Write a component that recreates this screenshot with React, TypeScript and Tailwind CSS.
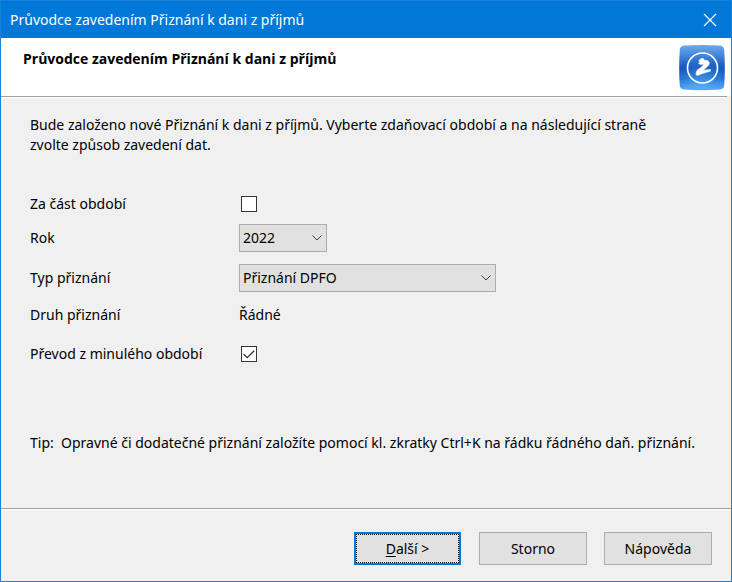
import React, { useState } from "react";

const YEARS = ["2022", "2021", "2020"];
const RETURN_TYPES = ["Přiznání DPFO", "Přiznání DPPO"];

function AppLogo() {
  return (
    <svg viewBox="0 0 46 46" className="w-[46px] h-[46px]" aria-hidden="true">
      <defs>
        <linearGradient id="logoBg" x1="0" y1="0" x2="0" y2="1">
          <stop offset="0" stopColor="#6fa9ea" />
          <stop offset="0.25" stopColor="#3f83da" />
          <stop offset="0.5" stopColor="#1757bd" />
          <stop offset="0.75" stopColor="#1f6fd2" />
          <stop offset="1" stopColor="#58abf2" />
        </linearGradient>
        <radialGradient id="logoGlow" cx="0.5" cy="0.95" r="0.6">
          <stop offset="0" stopColor="#5cb4fa" stopOpacity="0.6" />
          <stop offset="1" stopColor="#5cb4fa" stopOpacity="0" />
        </radialGradient>
      </defs>
      <path
        d="M5 0.500Q23 -0.500 41 0.500Q45 1 45.200 5Q46.500 23 45.200 40.500Q45 44 41 44.500Q23 46 5 44.500Q1 44 0.800 40.500Q-0.500 23 0.800 5Q1 1 5 0.500Z"
        fill="url(#logoBg)"
      />
      <rect x="1" y="1" width="44" height="43" rx="4" fill="url(#logoGlow)" />
      <circle cx="23.500" cy="23" r="15" fill="none" stroke="#fff" strokeWidth="1.600" />
      <path
        d="M19.800 15.800L22 13.600L24.300 13.400L25.300 15.200L28.500 15.500L30.300 17.500L29.800 20L27.500 22.300L24 25.300L31.500 24.600L31.300 26.200L26.500 27.600L22 29L18.500 30.600L17 29.700L17.200 27.500L18.300 25L22 22.500L25.200 19L21.500 19.400L19.500 18.300L21 17.200Z"
        fill="#fff"
        stroke="#fff"
        strokeWidth="0.600"
        strokeLinejoin="round"
      />
    </svg>
  );
}

type SelectBoxProps = {
  id: string;
  value: string;
  options: string[];
  width: string;
  onChange: (value: string) => void;
};

function SelectBox({ id, value, options, width, onChange }: SelectBoxProps) {
  return (
    <div className={`relative ${width}`}>
      <select
        id={id}
        value={value}
        onChange={(e) => onChange(e.target.value)}
        className="block w-full h-7 pl-[3px] pr-6 appearance-none border border-[#adadad] bg-[#e1e1e1] outline-none"
      >
        {options.map((option) => (
          <option key={option} value={option}>
            {option}
          </option>
        ))}
      </select>
      <svg
        viewBox="0 0 10 6"
        className="absolute right-[5px] top-[11px] w-[10px] h-[6px] pointer-events-none"
        fill="none"
        stroke="#404040"
        aria-hidden="true"
      >
        <path d="M0.500 0.500L5 5L9.500 0.500" />
      </svg>
    </div>
  );
}

type CheckBoxProps = {
  id: string;
  checked: boolean;
  onChange: (checked: boolean) => void;
};

function CheckBox({ id, checked, onChange }: CheckBoxProps) {
  return (
    <div className="relative w-4 h-4 ml-[2px]">
      <input
        id={id}
        type="checkbox"
        checked={checked}
        onChange={(e) => onChange(e.target.checked)}
        className="block w-4 h-4 appearance-none border border-[#333333] bg-white"
      />
      {checked && (
        <svg
          viewBox="0 0 16 16"
          className="absolute inset-0 w-4 h-4 pointer-events-none"
          fill="none"
          stroke="#333333"
          strokeWidth="1.300"
          aria-hidden="true"
        >
          <path d="M2.500 8L6.200 11.700L13.200 4.700" />
        </svg>
      )}
    </div>
  );
}

export default function App() {
  const [partPeriod, setPartPeriod] = useState(false);
  const [year, setYear] = useState("2022");
  const [returnType, setReturnType] = useState("Přiznání DPFO");
  const [transfer, setTransfer] = useState(true);

  return (
    <div className="min-h-screen flex flex-col border border-[#1a80d9] bg-[#f0f0f0] font-['Noto_Sans','Open_Sans',sans-serif] text-[14px] leading-5 text-black">
      {/* Title bar */}
      <div className="h-[37px] flex-shrink-0 flex items-center justify-between bg-[#0078d7] text-white pl-[9px] pr-[14px]">
        <span>Průvodce zavedením Přiznání k dani z příjmů</span>
        <button aria-label="Zavřít">
          <svg viewBox="0 0 14 14" className="w-[14px] h-[14px]" stroke="#fff" strokeWidth="1.200" fill="none">
            <path d="M1 1L13 13M13 1L1 13" />
          </svg>
        </button>
      </div>

      {/* Header */}
      <header className="h-[58px] flex-shrink-0 flex items-start justify-between bg-white pl-[22px] pr-[6px]">
        <h1 className="mt-[11px] font-bold font-['Open_Sans','Noto_Sans',sans-serif]">
          Průvodce zavedením Přiznání k dani z příjmů
        </h1>
        <div className="mt-[7px]">
          <AppLogo />
        </div>
      </header>
      <div className="h-[2px] mr-1 border-t border-[#a0a0a0] bg-white" />

      {/* Form */}
      <main className="flex-1 pl-[29px] pr-6 pt-[17px]">
        <p className="max-w-[640px]">
          Bude založeno nové Přiznání k dani z příjmů. Vyberte zdaňovací období a na následující
          straně zvolte způsob zavedení dat.
        </p>
        <div className="mt-8 grid grid-cols-[209px_1fr] grid-rows-[34px_34px_46px_28px_50px] items-center">
          <label htmlFor="part-period">Za část období</label>
          <CheckBox id="part-period" checked={partPeriod} onChange={setPartPeriod} />
          <label htmlFor="year">Rok</label>
          <SelectBox id="year" value={year} options={YEARS} width="w-[88px]" onChange={setYear} />
          <label htmlFor="return-type">Typ přiznání</label>
          <SelectBox
            id="return-type"
            value={returnType}
            options={RETURN_TYPES}
            width="w-[257px]"
            onChange={setReturnType}
          />
          <span>Druh přiznání</span>
          <span>Řádné</span>
          <label htmlFor="transfer">Převod z minulého období</label>
          <CheckBox id="transfer" checked={transfer} onChange={setTransfer} />
        </div>
        <p className="mt-[54px] whitespace-pre-wrap">
          {"Tip:  Opravné či dodatečné přiznání založíte pomocí kl. zkratky Ctrl+K na řádku řádného daň. přiznání."}
        </p>
      </main>

      {/* Buttons */}
      <div className="h-[2px] border-t border-[#a0a0a0] bg-white" />
      <footer className="flex justify-end pt-[22px] pb-4 pr-[19px]">
        <button className="w-[107px] h-[33px] mr-[18px] border-2 border-[#0078d7] bg-[#e1e1e1] p-0">
          <span className="flex h-full items-center justify-center border border-dotted border-black">
            <span>
              <span className="underline underline-offset-2">D</span>alší &gt;
            </span>
          </span>
        </button>
        <button className="w-[108px] h-[33px] mr-[17px] border border-[#adadad] bg-[#e1e1e1]">Storno</button>
        <button className="w-[108px] h-[33px] border border-[#adadad] bg-[#e1e1e1]">Nápověda</button>
      </footer>
    </div>
  );
}
